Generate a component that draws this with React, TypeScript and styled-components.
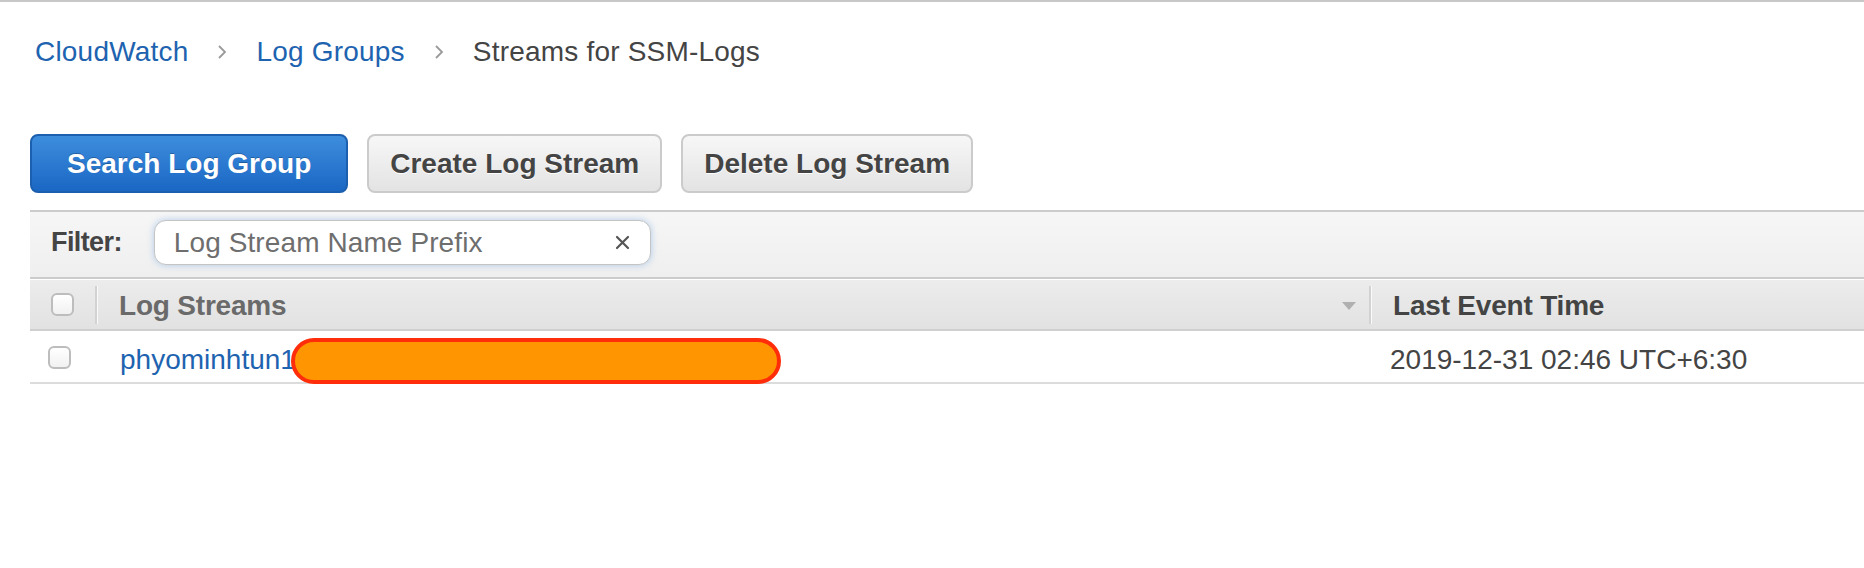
import styled, { createGlobalStyle } from "styled-components";

const GlobalStyle = createGlobalStyle`
  html, body {
    margin: 0;
    padding: 0;
    background: #fff;
    font-family: "Liberation Sans", Arial, sans-serif;
  }
`;

const Page = styled.div`
  width: 1864px;
  height: 568px;
  border-top: 2px solid #c8c8c8;
  box-sizing: border-box;
  overflow: hidden;
`;

const Breadcrumbs = styled.nav`
  display: flex;
  align-items: center;
  gap: 29px;
  padding: 34px 0 0 35px;
  font-size: 28px;
  line-height: 32px;
`;

const Crumb = styled.a<{ current?: boolean }>`
  color: ${(props) => (props.current ? "#444" : "#1e63b0")};
  text-decoration: none;
  letter-spacing: 0.2px;
`;

const Content = styled.div`
  margin-left: 30px;
`;

const Toolbar = styled.div`
  display: flex;
  gap: 19px;
  margin-top: 66px;
`;

const Button = styled.button<{ primary?: boolean; wide?: boolean }>`
  height: 59px;
  box-sizing: border-box;
  padding: 0 ${(props) => (props.wide ? "35px" : "21px")};
  border-radius: 8px;
  font-family: "Liberation Sans", Arial, sans-serif;
  font-size: 28px;
  font-weight: bold;
  cursor: pointer;
  border: 2px solid ${(props) => (props.primary ? "#1c5fae" : "#cbcbcb")};
  color: ${(props) => (props.primary ? "#fff" : "#444")};
  background: ${(props) =>
    props.primary
      ? "linear-gradient(#3d8ddd, #1a67c4)"
      : "linear-gradient(#f7f7f7, #e3e3e3)"};
  text-shadow: ${(props) =>
    props.primary ? "0 -1px 0 rgba(0,0,0,0.25)" : "0 1px 0 #fff"};
`;

const Table = styled.div`
  margin-top: 17px;
`;

const FilterBar = styled.div`
  display: flex;
  align-items: center;
  gap: 32px;
  height: 69px;
  box-sizing: border-box;
  padding: 0 0 4px 21px;
  border-top: 2px solid #cccccc;
  border-bottom: 2px solid #cccccc;
  background: linear-gradient(#f6f6f6, #efefef);
`;

const FilterLabel = styled.span`
  font-size: 27px;
  font-weight: bold;
  color: #444;
  letter-spacing: -0.6px;
`;

const FilterInput = styled.div`
  display: flex;
  align-items: center;
  justify-content: space-between;
  width: 497px;
  height: 45px;
  box-sizing: border-box;
  padding: 0 20px 0 19px;
  background: #fff;
  border: 1px solid #c4c4c4;
  border-radius: 12px;
  box-shadow: 0 0 7px rgba(120, 170, 225, 0.55);
`;

const Placeholder = styled.span`
  font-size: 28px;
  color: #6e6e6e;
  letter-spacing: 0.1px;
`;

const Grid = styled.div<{ header?: boolean }>`
  display: grid;
  grid-template-columns: 65px 1274px 1fr;
  align-items: center;
  box-sizing: border-box;
  height: ${(props) => (props.header ? "52px" : "53px")};
  border-top: ${(props) => (props.header ? "1px solid #fff" : "none")};
  border-bottom: 2px solid ${(props) => (props.header ? "#cfcfcf" : "#dcdcdc")};
  background: ${(props) =>
    props.header ? "linear-gradient(#ececec, #e2e2e2)" : "#fff"};
`;

const CheckCell = styled.div<{ header?: boolean }>`
  display: flex;
  align-items: center;
  padding-left: ${(props) => (props.header ? "21px" : "18px")};
`;

const Checkbox = styled.span`
  width: 23px;
  height: 23px;
  box-sizing: border-box;
  border: 2px solid #bdbdbd;
  border-radius: 6px;
  background: linear-gradient(#ffffff, #f1f1f1);
`;

const HeadCell = styled.div<{ muted?: boolean }>`
  display: flex;
  align-items: center;
  justify-content: space-between;
  height: 35px;
  padding: 3px 13px 0 22px;
  border-left: 2px solid #d2d2d2;
  box-shadow: inset 1px 0 0 #fafafa;
  font-size: 28px;
  font-weight: bold;
  color: ${(props) => (props.muted ? "#6a6a6a" : "#444")};
  letter-spacing: -0.2px;
`;

const SortArrow = styled.span`
  width: 0;
  height: 0;
  margin-top: -1px;
  border-left: 7px solid transparent;
  border-right: 7px solid transparent;
  border-top: 8px solid #b0b0b0;
`;

const Cell = styled.div<{ first?: boolean }>`
  display: flex;
  align-items: center;
  padding-left: ${(props) => (props.first ? "25px" : "21px")};
  padding-top: 5px;
  font-size: 28px;
  color: #444;
`;

const StreamLink = styled.a`
  color: #1e63b0;
  text-decoration: none;
`;

const Redaction = styled.span`
  display: inline-block;
  width: 490px;
  height: 46px;
  box-sizing: border-box;
  margin: 2px 0 0 -5px;
  border: 4px solid #ff2d0a;
  border-radius: 23px;
  background: #ff9500;
`;

function Chevron() {
  return (
    <svg width="10" height="16" viewBox="0 0 10 16">
      <path d="M2 2l6 6-6 6" fill="none" stroke="#9a9a9a" strokeWidth="1.8" />
    </svg>
  );
}

function ClearIcon() {
  return (
    <svg width="15" height="15" viewBox="0 0 15 15">
      <path
        d="M2 2l11 11M13 2L2 13"
        stroke="#555"
        strokeWidth="2.2"
        strokeLinecap="round"
      />
    </svg>
  );
}

export default function App() {
  return (
    <Page>
      <GlobalStyle />
      <Breadcrumbs>
        <Crumb href="#">CloudWatch</Crumb>
        <Chevron />
        <Crumb href="#">Log Groups</Crumb>
        <Chevron />
        <Crumb current>Streams for SSM-Logs</Crumb>
      </Breadcrumbs>

      <Content>
        <Toolbar>
          <Button primary wide>
            Search Log Group
          </Button>
          <Button>Create Log Stream</Button>
          <Button>Delete Log Stream</Button>
        </Toolbar>

        <Table>
          <FilterBar>
            <FilterLabel>Filter:</FilterLabel>
            <FilterInput>
              <Placeholder>Log Stream Name Prefix</Placeholder>
              <ClearIcon />
            </FilterInput>
          </FilterBar>

          <Grid header>
            <CheckCell header>
              <Checkbox />
            </CheckCell>
            <HeadCell muted>
              Log Streams
              <SortArrow />
            </HeadCell>
            <HeadCell>Last Event Time</HeadCell>
          </Grid>

          <Grid>
            <CheckCell>
              <Checkbox />
            </CheckCell>
            <Cell first>
              <StreamLink href="#">phyominhtun1</StreamLink>
              <Redaction />
            </Cell>
            <Cell>2019-12-31 02:46 UTC+6:30</Cell>
          </Grid>
        </Table>
      </Content>
    </Page>
  );
}
